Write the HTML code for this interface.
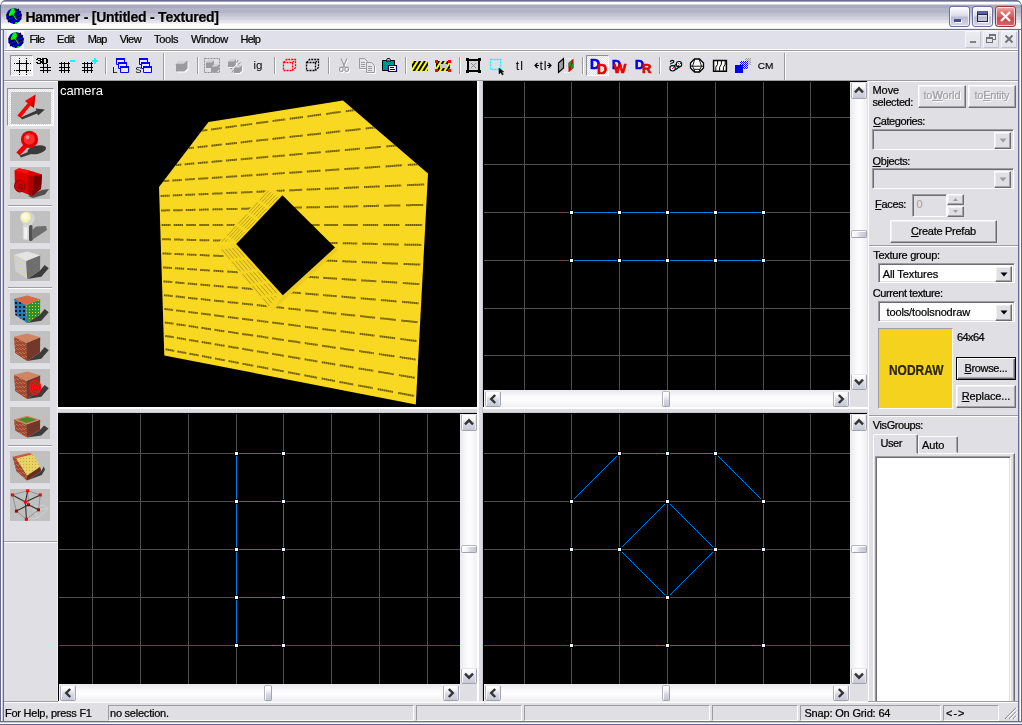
<!DOCTYPE html><html><head><meta charset="utf-8"><title>Hammer</title><style>
*{box-sizing:border-box;margin:0;padding:0}
html,body{width:1022px;height:725px;overflow:hidden;background:#fff}
body{font-family:"Liberation Sans",sans-serif;font-size:11px;color:#000;position:relative}
.a{position:absolute}
.t{position:absolute;white-space:nowrap;line-height:13px;font-size:11px;-webkit-text-stroke:0.22px}
.btn{-webkit-text-stroke:0.22px}
#win{position:absolute;left:0;top:0;width:1022px;height:725px;background:#e0dfe3;border-radius:6px 6px 0 0;overflow:hidden;will-change:transform}
.vp{position:absolute;background:#000;overflow:hidden}
.sb{position:absolute;background:linear-gradient(90deg,#e9e9ee,#fbfbfd 40%,#fdfdfe 60%,#f0f0f4)}
.sbh{position:absolute;background:linear-gradient(180deg,#e9e9ee,#fbfbfd 40%,#fdfdfe 60%,#f0f0f4)}
.sbtn{position:absolute;width:16px;height:16px;border:1px solid;border-color:#e4e4ea #a6a6b2 #a2a2ae #b2b2bc;border-radius:2px;background:linear-gradient(180deg,#ffffff,#f6f6f9 30%,#d9dae4 55%,#c6c8d6);box-shadow:inset 1px 1px 0 #fff,inset -1px 0 0 #e8e8ee}
.thumbv{position:absolute;width:16px;height:8px;border:1px solid;border-color:#b6b6c2 #a2a2ae #a2a2ae #b2b2bc;border-radius:2px;background:linear-gradient(90deg,#ffffff,#f2f2f6 35%,#d6d7e2 60%,#c4c6d4);box-shadow:inset 1px 1px 0 #fff}
.thumbh{position:absolute;width:8px;height:16px;border:1px solid;border-color:#b6b6c2 #a2a2ae #a2a2ae #b2b2bc;border-radius:2px;background:linear-gradient(180deg,#ffffff,#f2f2f6 35%,#d6d7e2 60%,#c4c6d4);box-shadow:inset 1px 1px 0 #fff}
.btn{position:absolute;border:1px solid;border-color:#fff #6e6e72 #6e6e72 #fff;box-shadow:inset -1px -1px 0 #a5a5a8,inset 1px 1px 0 #f1eff2;background:#e0dfe3;text-align:center;font-size:11px;white-space:nowrap}
.sunk{position:absolute;border:1px solid;border-color:#9d9da1 #fff #fff #9d9da1;box-shadow:inset 1px 1px 0 #6e6e72,inset -1px -1px 0 #e0dfe3}
.pane{position:absolute;top:705px;height:16px;border:1px solid;border-color:#9d9da1 #fff #fff #9d9da1}
.icn{position:absolute;left:10px;width:40px;height:32px;background:#c0c0c0;overflow:hidden}
.tsep{position:absolute;top:57px;width:2px;height:17px;border-left:1px solid #9d9da1;border-right:1px solid #fff}
.lsep{position:absolute;left:8px;width:44px;height:2px;border-top:1px solid #9d9da1;border-bottom:1px solid #fff}
u{text-decoration:underline}
</style></head><body><div id="win">
<div class="a" style="left:0;top:0;width:1022px;height:30px;background:linear-gradient(180deg,#6d6d90 0px,#6d6d90 1px,#9c9cc4 1px,#9c9cc4 2px,#ffffff 2px,#ffffff 4px,#d5d6e0 4.5px,#a8a9bd 5.5px,#a8a9bd 8px,#b3b4c7 8.5px,#b3b4c7 13px,#c0c1d0 13.5px,#c4c5d3 16px,#d0d1dc 17px,#d3d4df 20px,#e1e1e9 20.5px,#e6e6ed 23px,#f3f3f7 23.5px,#ffffff 25px,#ffffff 28px,#ececf2 28.5px,#ececf2 29px,#6b6ba3 29px,#6b6ba3 30px)"></div>
<svg class="a" style="left:6px;top:8px" width="16" height="16" viewBox="0 0 16 16"><circle cx="8" cy="8" r="7.8" fill="#0000f8"/><path d="M0.5 7.2 L3.2 5.8 M0.6 10.6 L6.3 7.7 M2 13.8 L8 10.6 M9.5 3 L13 1.2 M9.2 6.4 L15 3.4 M10.5 9.4 L15.8 6.6 M11.5 12.4 L15.3 10.4 M7 15.2 L12.5 12.9" stroke="#000" stroke-width="1.5" fill="none"/><path d="M2.6 5.9 L4.6 1.9 L6.2 0.3 L8.6 0.3 L9.2 4 L8.3 5.9 L5.6 7.6 L3.3 7.9 Z" fill="#00f800"/><path d="M7.2 6.2 L10.6 11.7" stroke="#00f800" stroke-width="1.5"/><path d="M9 14.2 L11.6 13.8 L11.2 15.3 L9.4 15.7Z" fill="#00f000"/><path d="M2.3 5.9 L4.3 1.6 M8.8 0.2 L9.5 4.2 L8.5 6 M6.3 7.6 L9.6 12.5 M8 6.6 L11.3 11.6" stroke="#000" stroke-width="0.7" fill="none"/></svg>
<div class="t" style="left:25.4px;top:8.5px;letter-spacing:-0.236px;font-size:14px;font-weight:bold;line-height:17px;text-shadow:0 1px 0 rgba(255,255,255,.55)">Hammer - [Untitled - Textured]</div>
<div class="a" style="left:949px;top:6px;width:21px;height:21px;border:1px solid #6c6e9c;border-radius:3px;background:linear-gradient(180deg,#ffffff,#dcdde8 45%,#b9bbd0 55%,#d8d9e6);box-shadow:inset 0 0 0 1px rgba(255,255,255,.7)"><div class="a" style="left:4px;top:12px;width:7px;height:3px;background:#4a4e8c;box-shadow:1px 1px 0 #fff"></div></div>
<div class="a" style="left:972px;top:6px;width:21px;height:21px;border:1px solid #6c6e9c;border-radius:3px;background:linear-gradient(180deg,#ffffff,#dcdde8 45%,#b9bbd0 55%,#d8d9e6);box-shadow:inset 0 0 0 1px rgba(255,255,255,.7)"><div class="a" style="left:4px;top:4px;width:11px;height:11px;border:1px solid #23234a;border-top:3px solid #5a5ea2;box-shadow:1px 1px 0 #fff,inset 0 1px 0 #23234a"></div></div>
<div class="a" style="left:995px;top:6px;width:21px;height:21px;border:1px solid #8f3a38;border-radius:3px;background:linear-gradient(180deg,#f0b0a8,#e07a78 25%,#d65c5e 50%,#c8484c 60%,#d4686a);box-shadow:inset 0 0 0 1px rgba(255,255,255,.7)"><svg class="a" style="left:2px;top:2px" width="15" height="15" viewBox="0 0 15 15"><path d="M3 3 L12 12 M12 3 L3 12" stroke="#fff" stroke-width="2.2" stroke-linecap="butt"/></svg></div>
<div class="a" style="left:0;top:0;width:1022px;height:30px;border:1px solid #6d6d90;border-bottom:none;border-radius:6px 6px 0 0"></div>
<div class="a" style="left:0;top:30px;width:4px;height:695px;background:linear-gradient(90deg,#66668c 0,#66668c 1px,#fff 1px,#fff 2px,#c9c9d6 2px,#c9c9d6 3px,#6b6ba3 3px)"></div>
<div class="a" style="left:1018px;top:30px;width:4px;height:695px;background:linear-gradient(270deg,#66668c 0,#66668c 1px,#fff 1px,#fff 2px,#c9c9d6 2px,#c9c9d6 3px,#6b6ba3 3px)"></div>
<div class="a" style="left:0;top:721px;width:1022px;height:4px;background:linear-gradient(0deg,#66668c 0,#66668c 1px,#fff 1px,#fff 2px,#c9c9d6 2px,#c9c9d6 3px,#6b6ba3 3px)"></div>
<div class="a" style="left:0;top:5px;width:1px;height:25px;background:#66668c"></div><div class="a" style="left:1021px;top:5px;width:1px;height:25px;background:#66668c"></div>
<div class="a" style="left:4px;top:30px;width:1014px;height:1px;background:#f0f0f5"></div>
<div class="a" style="left:4px;top:31px;width:1014px;height:18px;background:#dfe0e9"></div>
<div class="a" style="left:4px;top:49px;width:1014px;height:1px;background:#fff"></div>
<div class="a" style="left:4px;top:50px;width:1014px;height:1px;background:#9d9da1"></div>
<div class="a" style="left:4px;top:51px;width:1014px;height:1px;background:#fff"></div>
<div class="a" style="left:7px;top:31px;width:17px;height:18px;background:#f4f4f8"></div>
<svg class="a" style="left:8px;top:32px" width="16" height="16" viewBox="0 0 16 16"><circle cx="8" cy="8" r="7.8" fill="#0000f8"/><path d="M0.5 7.2 L3.2 5.8 M0.6 10.6 L6.3 7.7 M2 13.8 L8 10.6 M9.5 3 L13 1.2 M9.2 6.4 L15 3.4 M10.5 9.4 L15.8 6.6 M11.5 12.4 L15.3 10.4 M7 15.2 L12.5 12.9" stroke="#000" stroke-width="1.5" fill="none"/><path d="M2.6 5.9 L4.6 1.9 L6.2 0.3 L8.6 0.3 L9.2 4 L8.3 5.9 L5.6 7.6 L3.3 7.9 Z" fill="#00f800"/><path d="M7.2 6.2 L10.6 11.7" stroke="#00f800" stroke-width="1.5"/><path d="M9 14.2 L11.6 13.8 L11.2 15.3 L9.4 15.7Z" fill="#00f000"/><path d="M2.3 5.9 L4.3 1.6 M8.8 0.2 L9.5 4.2 L8.5 6 M6.3 7.6 L9.6 12.5 M8 6.6 L11.3 11.6" stroke="#000" stroke-width="0.7" fill="none"/></svg>
<div class="t" style="left:29.6px;top:33px;letter-spacing:-0.711px;">File</div>
<div class="t" style="left:57px;top:33px;letter-spacing:-0.390px;">Edit</div>
<div class="t" style="left:87.7px;top:33px;letter-spacing:-0.853px;">Map</div>
<div class="t" style="left:119.7px;top:33px;letter-spacing:-0.585px;">View</div>
<div class="t" style="left:154px;top:33px;letter-spacing:-0.272px;">Tools</div>
<div class="t" style="left:191px;top:33px;letter-spacing:-0.385px;">Window</div>
<div class="t" style="left:240.5px;top:33px;letter-spacing:-0.775px;">Help</div>
<div class="a" style="left:965px;top:31px;width:16px;height:17px;border:1px solid;border-color:#f6f6fa #c6c6d0 #c2c2cc #f6f6fa;border-radius:1px;background:linear-gradient(180deg,#ececf2,#e2e2ea);"><div class="a" style="left:4px;top:9px;width:6px;height:2px;background:#808088"></div></div>
<div class="a" style="left:983px;top:31px;width:16px;height:17px;border:1px solid;border-color:#f6f6fa #c6c6d0 #c2c2cc #f6f6fa;border-radius:1px;background:linear-gradient(180deg,#ececf2,#e2e2ea);"><div class="a" style="left:5px;top:2px;width:7px;height:6px;border:1px solid #707078;border-top-width:2px"></div><div class="a" style="left:2px;top:5px;width:7px;height:6px;border:1px solid #707078;border-top-width:2px;background:#e6e6ec"></div></div>
<div class="a" style="left:1001px;top:31px;width:16px;height:17px;border:1px solid;border-color:#f6f6fa #c6c6d0 #c2c2cc #f6f6fa;border-radius:1px;background:linear-gradient(180deg,#ececf2,#e2e2ea);"><svg class="a" style="left:2px;top:2px" width="10" height="10" viewBox="0 0 10 10"><path d="M1.5 1.5 L8.5 8.5 M8.5 1.5 L1.5 8.5" stroke="#707078" stroke-width="1.8"/></svg></div>
<div class="a" style="left:4px;top:80px;width:1014px;height:1px;background:#9d9da1"></div>
<div class="a" style="left:163px;top:53px;width:1px;height:27px;background:#9d9da1"></div><div class="a" style="left:164px;top:53px;width:1px;height:27px;background:#fff"></div>
<div class="a" style="left:784px;top:53px;width:1px;height:27px;background:#9d9da1"></div><div class="a" style="left:785px;top:53px;width:1px;height:27px;background:#fff"></div>
<div class="tsep" style="left:105px"></div>
<div class="tsep" style="left:197px"></div>
<div class="tsep" style="left:274px"></div>
<div class="tsep" style="left:328px"></div>
<div class="tsep" style="left:405px"></div>
<div class="tsep" style="left:459px"></div>
<div class="tsep" style="left:582px"></div>
<div class="tsep" style="left:659px"></div>
<div class="a" style="left:4px;top:701px;width:1014px;height:1px;background:#9d9da1"></div>
<div class="a" style="left:4px;top:702px;width:1014px;height:1px;background:#fff"></div>
<div class="a" style="left:58px;top:701px;width:810px;height:1px;background:#f1f1f5"></div>
<div class="t" style="left:5px;top:707px;letter-spacing:-0.241px;">For Help, press F1</div>
<div class="pane" style="left:108px;width:306px"></div>
<div class="pane" style="left:416px;width:106px"></div>
<div class="pane" style="left:524px;width:186px"></div>
<div class="pane" style="left:712px;width:86px"></div>
<div class="pane" style="left:800px;width:141px"></div>
<div class="pane" style="left:943px;width:56px"></div>
<div class="t" style="left:110px;top:707px;letter-spacing:-0.230px;">no selection.</div>
<div class="t" style="left:804.4px;top:707px;letter-spacing:-0.161px;">Snap: On Grid: 64</div>
<div class="t" style="left:946px;top:707px;letter-spacing:0.992px;">&lt;-&gt;</div>
<svg class="a" style="left:1003px;top:706px" width="14" height="14" viewBox="0 0 14 14"><path d="M13 2 L2 13 M13 6 L6 13 M13 10 L10 13" stroke="#9d9da1" stroke-width="1.2"/><path d="M14 2 L3 13 M14 6 L7 13 M14 10 L11 13" stroke="#fff" stroke-width="1"/></svg>
<div class="a" style="left:4px;top:81px;width:54px;height:620px;background:#e0dfe3;border-top:1px solid #fff"></div>
<div class="a" style="left:58px;top:407px;width:810px;height:6px;background:linear-gradient(180deg,#fff 0,#fff 2px,#dcdce2 2px,#dcdce2 5px,#c8c8ce 5px)"></div>
<div class="a" style="left:477px;top:81px;width:6px;height:620px;background:linear-gradient(90deg,#fff 0,#fff 2px,#dcdce2 2px,#dcdce2 5px,#c8c8ce 5px)"></div>
<div class="a" style="left:483px;top:81px;width:385px;height:326px;background:#000"></div>
<div class="a" style="left:58px;top:413px;width:419px;height:288px;background:#000"></div>
<div class="a" style="left:483px;top:413px;width:385px;height:288px;background:#000"></div>
<div class="vp" style="left:483px;top:81px;width:367px;height:309px">
<div class="a" style="left:41px;top:1px;width:1px;height:308px;background:#4e4e4e"></div><div class="a" style="left:88px;top:1px;width:1px;height:308px;background:#4e4e4e"></div><div class="a" style="left:136px;top:1px;width:1px;height:308px;background:#4e4e4e"></div><div class="a" style="left:184px;top:1px;width:1px;height:308px;background:#4e4e4e"></div><div class="a" style="left:232px;top:1px;width:1px;height:308px;background:#4e4e4e"></div><div class="a" style="left:280px;top:1px;width:1px;height:308px;background:#4e4e4e"></div><div class="a" style="left:327px;top:1px;width:1px;height:308px;background:#4e4e4e"></div><div class="a" style="left:1px;top:36px;width:366px;height:1px;background:#4e4e4e"></div><div class="a" style="left:1px;top:83px;width:366px;height:1px;background:#4e4e4e"></div><div class="a" style="left:1px;top:131px;width:366px;height:1px;background:#4e4e4e"></div><div class="a" style="left:1px;top:179px;width:366px;height:1px;background:#4e4e4e"></div><div class="a" style="left:1px;top:227px;width:366px;height:1px;background:#4e4e4e"></div><div class="a" style="left:1px;top:274px;width:366px;height:1px;background:#4e4e4e"></div><div class="a" style="left:88px;top:131px;width:193px;height:1px;background:#0082dc"></div><div class="a" style="left:88px;top:179px;width:193px;height:1px;background:#0082dc"></div><div class="a" style="left:88px;top:131px;width:1px;height:49px;background:#0082dc"></div><div class="a" style="left:136px;top:131px;width:1px;height:49px;background:#0082dc"></div><div class="a" style="left:184px;top:131px;width:1px;height:49px;background:#0082dc"></div><div class="a" style="left:232px;top:131px;width:1px;height:49px;background:#0082dc"></div><div class="a" style="left:280px;top:131px;width:1px;height:49px;background:#0082dc"></div><div class="a" style="left:86px;top:129px;width:5px;height:5px;background:#fff;border:1px solid #000"></div><div class="a" style="left:134px;top:129px;width:5px;height:5px;background:#fff;border:1px solid #000"></div><div class="a" style="left:182px;top:129px;width:5px;height:5px;background:#fff;border:1px solid #000"></div><div class="a" style="left:230px;top:129px;width:5px;height:5px;background:#fff;border:1px solid #000"></div><div class="a" style="left:278px;top:129px;width:5px;height:5px;background:#fff;border:1px solid #000"></div><div class="a" style="left:86px;top:177px;width:5px;height:5px;background:#fff;border:1px solid #000"></div><div class="a" style="left:134px;top:177px;width:5px;height:5px;background:#fff;border:1px solid #000"></div><div class="a" style="left:182px;top:177px;width:5px;height:5px;background:#fff;border:1px solid #000"></div><div class="a" style="left:230px;top:177px;width:5px;height:5px;background:#fff;border:1px solid #000"></div><div class="a" style="left:278px;top:177px;width:5px;height:5px;background:#fff;border:1px solid #000"></div>
</div>
<div class="sb" style="left:850px;top:82px;width:17px;height:308px"></div>
<div class="sbtn" style="left:851px;top:82px;height:17px"><svg class="a" style="left:2px;top:3px" width="10" height="8" viewBox="0 0 10 8"><path d="M1 6.3 L5 2.3 L9 6.3" stroke="#333" stroke-width="2.4" fill="none"/></svg></div>
<div class="sbtn" style="left:851px;top:374px;height:16px"><svg class="a" style="left:2px;top:3px" width="10" height="8" viewBox="0 0 10 8"><path d="M1 1.7 L5 5.7 L9 1.7" stroke="#333" stroke-width="2.4" fill="none"/></svg></div>
<div class="thumbv" style="left:851px;top:230px"></div>
<div class="sbh" style="left:484px;top:390px;width:366px;height:17px"></div>
<div class="sbtn" style="left:485px;top:391px"><svg class="a" style="left:3px;top:2px" width="8" height="10" viewBox="0 0 8 10"><path d="M6.2 1 L2.2 5 L6.2 9" stroke="#333" stroke-width="2.4" fill="none"/></svg></div>
<div class="sbtn" style="left:833px;top:391px"><svg class="a" style="left:3px;top:2px" width="8" height="10" viewBox="0 0 8 10"><path d="M1.8 1 L5.8 5 L1.8 9" stroke="#333" stroke-width="2.4" fill="none"/></svg></div>
<div class="thumbh" style="left:662px;top:391px"></div>
<div class="a" style="left:850px;top:390px;width:18px;height:17px;background:#e0dfe3"></div>
<div class="a" style="left:867px;top:81px;width:1px;height:326px;background:#e0dfe3"></div>
<div class="vp" style="left:58px;top:413px;width:402px;height:271px">
<div class="a" style="left:34px;top:1px;width:1px;height:270px;background:#4e4e4e"></div><div class="a" style="left:82px;top:1px;width:1px;height:270px;background:#4e4e4e"></div><div class="a" style="left:130px;top:1px;width:1px;height:270px;background:#4e4e4e"></div><div class="a" style="left:178px;top:1px;width:1px;height:270px;background:#4e4e4e"></div><div class="a" style="left:225px;top:1px;width:1px;height:270px;background:#4e4e4e"></div><div class="a" style="left:273px;top:1px;width:1px;height:270px;background:#4e4e4e"></div><div class="a" style="left:321px;top:1px;width:1px;height:270px;background:#4e4e4e"></div><div class="a" style="left:369px;top:1px;width:1px;height:270px;background:#4e4e4e"></div><div class="a" style="left:1px;top:40px;width:401px;height:1px;background:#4e4e4e"></div><div class="a" style="left:1px;top:88px;width:401px;height:1px;background:#4e4e4e"></div><div class="a" style="left:1px;top:136px;width:401px;height:1px;background:#4e4e4e"></div><div class="a" style="left:1px;top:184px;width:401px;height:1px;background:#4e4e4e"></div><div class="a" style="left:1px;top:232px;width:401px;height:1px;background:#006868"></div><div class="a" style="left:178px;top:40px;width:1px;height:193px;background:#0082dc"></div><div class="a" style="left:225px;top:40px;width:1px;height:193px;background:#0082dc"></div><div class="a" style="left:178px;top:40px;width:48px;height:1px;background:#0082dc"></div><div class="a" style="left:178px;top:88px;width:48px;height:1px;background:#0082dc"></div><div class="a" style="left:178px;top:136px;width:48px;height:1px;background:#0082dc"></div><div class="a" style="left:178px;top:184px;width:48px;height:1px;background:#0082dc"></div><div class="a" style="left:178px;top:232px;width:48px;height:1px;background:#0082dc"></div><div class="a" style="left:176px;top:38px;width:5px;height:5px;background:#fff;border:1px solid #000"></div><div class="a" style="left:176px;top:86px;width:5px;height:5px;background:#fff;border:1px solid #000"></div><div class="a" style="left:176px;top:134px;width:5px;height:5px;background:#fff;border:1px solid #000"></div><div class="a" style="left:176px;top:182px;width:5px;height:5px;background:#fff;border:1px solid #000"></div><div class="a" style="left:176px;top:230px;width:5px;height:5px;background:#fff;border:1px solid #000"></div><div class="a" style="left:223px;top:38px;width:5px;height:5px;background:#fff;border:1px solid #000"></div><div class="a" style="left:223px;top:86px;width:5px;height:5px;background:#fff;border:1px solid #000"></div><div class="a" style="left:223px;top:134px;width:5px;height:5px;background:#fff;border:1px solid #000"></div><div class="a" style="left:223px;top:182px;width:5px;height:5px;background:#fff;border:1px solid #000"></div><div class="a" style="left:223px;top:230px;width:5px;height:5px;background:#fff;border:1px solid #000"></div>
</div>
<div class="sb" style="left:460px;top:414px;width:17px;height:270px"></div>
<div class="sbtn" style="left:461px;top:414px;height:17px"><svg class="a" style="left:2px;top:3px" width="10" height="8" viewBox="0 0 10 8"><path d="M1 6.3 L5 2.3 L9 6.3" stroke="#333" stroke-width="2.4" fill="none"/></svg></div>
<div class="sbtn" style="left:461px;top:668px;height:16px"><svg class="a" style="left:2px;top:3px" width="10" height="8" viewBox="0 0 10 8"><path d="M1 1.7 L5 5.7 L9 1.7" stroke="#333" stroke-width="2.4" fill="none"/></svg></div>
<div class="thumbv" style="left:461px;top:545px"></div>
<div class="sbh" style="left:59px;top:684px;width:401px;height:17px"></div>
<div class="sbtn" style="left:60px;top:685px"><svg class="a" style="left:3px;top:2px" width="8" height="10" viewBox="0 0 8 10"><path d="M6.2 1 L2.2 5 L6.2 9" stroke="#333" stroke-width="2.4" fill="none"/></svg></div>
<div class="sbtn" style="left:443px;top:685px"><svg class="a" style="left:3px;top:2px" width="8" height="10" viewBox="0 0 8 10"><path d="M1.8 1 L5.8 5 L1.8 9" stroke="#333" stroke-width="2.4" fill="none"/></svg></div>
<div class="thumbh" style="left:264px;top:685px"></div>
<div class="a" style="left:460px;top:684px;width:17px;height:17px;background:#e0dfe3"></div>
<div class="vp" style="left:483px;top:413px;width:367px;height:271px">
<div class="a" style="left:41px;top:1px;width:1px;height:270px;background:#4e4e4e"></div><div class="a" style="left:88px;top:1px;width:1px;height:270px;background:#4e4e4e"></div><div class="a" style="left:136px;top:1px;width:1px;height:270px;background:#4e4e4e"></div><div class="a" style="left:184px;top:1px;width:1px;height:270px;background:#4e4e4e"></div><div class="a" style="left:232px;top:1px;width:1px;height:270px;background:#4e4e4e"></div><div class="a" style="left:280px;top:1px;width:1px;height:270px;background:#4e4e4e"></div><div class="a" style="left:327px;top:1px;width:1px;height:270px;background:#4e4e4e"></div><div class="a" style="left:1px;top:40px;width:366px;height:1px;background:#4e4e4e"></div><div class="a" style="left:1px;top:88px;width:366px;height:1px;background:#4e4e4e"></div><div class="a" style="left:1px;top:136px;width:366px;height:1px;background:#4e4e4e"></div><div class="a" style="left:1px;top:184px;width:366px;height:1px;background:#4e4e4e"></div><div class="a" style="left:1px;top:232px;width:366px;height:1px;background:#006868"></div><svg class="a" style="left:0;top:0;overflow:visible" width="1" height="1"><line x1="88.5" y1="88.5" x2="136.5" y2="40.5" stroke="#0082dc" stroke-width="1" shape-rendering="crispEdges"/></svg><div class="a" style="left:136px;top:40px;width:97px;height:1px;background:#0082dc"></div><svg class="a" style="left:0;top:0;overflow:visible" width="1" height="1"><line x1="232.5" y1="40.5" x2="280.5" y2="88.5" stroke="#0082dc" stroke-width="1" shape-rendering="crispEdges"/></svg><div class="a" style="left:280px;top:88px;width:1px;height:145px;background:#0082dc"></div><div class="a" style="left:88px;top:232px;width:193px;height:1px;background:#0082dc"></div><div class="a" style="left:88px;top:88px;width:1px;height:145px;background:#0082dc"></div><div class="a" style="left:184px;top:40px;width:1px;height:49px;background:#0082dc"></div><div class="a" style="left:88px;top:136px;width:49px;height:1px;background:#0082dc"></div><div class="a" style="left:232px;top:136px;width:49px;height:1px;background:#0082dc"></div><div class="a" style="left:184px;top:184px;width:1px;height:49px;background:#0082dc"></div><svg class="a" style="left:0;top:0;overflow:visible" width="1" height="1"><line x1="184.5" y1="88.5" x2="232.5" y2="136.5" stroke="#0082dc" stroke-width="1" shape-rendering="crispEdges"/></svg><svg class="a" style="left:0;top:0;overflow:visible" width="1" height="1"><line x1="232.5" y1="136.5" x2="184.5" y2="184.5" stroke="#0082dc" stroke-width="1" shape-rendering="crispEdges"/></svg><svg class="a" style="left:0;top:0;overflow:visible" width="1" height="1"><line x1="184.5" y1="184.5" x2="136.5" y2="136.5" stroke="#0082dc" stroke-width="1" shape-rendering="crispEdges"/></svg><svg class="a" style="left:0;top:0;overflow:visible" width="1" height="1"><line x1="136.5" y1="136.5" x2="184.5" y2="88.5" stroke="#0082dc" stroke-width="1" shape-rendering="crispEdges"/></svg><div class="a" style="left:86px;top:86px;width:5px;height:5px;background:#fff;border:1px solid #000"></div><div class="a" style="left:134px;top:38px;width:5px;height:5px;background:#fff;border:1px solid #000"></div><div class="a" style="left:182px;top:38px;width:5px;height:5px;background:#fff;border:1px solid #000"></div><div class="a" style="left:230px;top:38px;width:5px;height:5px;background:#fff;border:1px solid #000"></div><div class="a" style="left:278px;top:86px;width:5px;height:5px;background:#fff;border:1px solid #000"></div><div class="a" style="left:182px;top:86px;width:5px;height:5px;background:#fff;border:1px solid #000"></div><div class="a" style="left:86px;top:134px;width:5px;height:5px;background:#fff;border:1px solid #000"></div><div class="a" style="left:134px;top:134px;width:5px;height:5px;background:#fff;border:1px solid #000"></div><div class="a" style="left:230px;top:134px;width:5px;height:5px;background:#fff;border:1px solid #000"></div><div class="a" style="left:278px;top:134px;width:5px;height:5px;background:#fff;border:1px solid #000"></div><div class="a" style="left:182px;top:182px;width:5px;height:5px;background:#fff;border:1px solid #000"></div><div class="a" style="left:86px;top:230px;width:5px;height:5px;background:#fff;border:1px solid #000"></div><div class="a" style="left:182px;top:230px;width:5px;height:5px;background:#fff;border:1px solid #000"></div><div class="a" style="left:278px;top:230px;width:5px;height:5px;background:#fff;border:1px solid #000"></div>
</div>
<div class="sb" style="left:850px;top:414px;width:17px;height:270px"></div>
<div class="sbtn" style="left:851px;top:414px;height:17px"><svg class="a" style="left:2px;top:3px" width="10" height="8" viewBox="0 0 10 8"><path d="M1 6.3 L5 2.3 L9 6.3" stroke="#333" stroke-width="2.4" fill="none"/></svg></div>
<div class="sbtn" style="left:851px;top:668px;height:16px"><svg class="a" style="left:2px;top:3px" width="10" height="8" viewBox="0 0 10 8"><path d="M1 1.7 L5 5.7 L9 1.7" stroke="#333" stroke-width="2.4" fill="none"/></svg></div>
<div class="thumbv" style="left:851px;top:545px"></div>
<div class="sbh" style="left:484px;top:684px;width:366px;height:17px"></div>
<div class="sbtn" style="left:485px;top:685px"><svg class="a" style="left:3px;top:2px" width="8" height="10" viewBox="0 0 8 10"><path d="M6.2 1 L2.2 5 L6.2 9" stroke="#333" stroke-width="2.4" fill="none"/></svg></div>
<div class="sbtn" style="left:833px;top:685px"><svg class="a" style="left:3px;top:2px" width="8" height="10" viewBox="0 0 8 10"><path d="M1.8 1 L5.8 5 L1.8 9" stroke="#333" stroke-width="2.4" fill="none"/></svg></div>
<div class="thumbh" style="left:662px;top:685px"></div>
<div class="a" style="left:850px;top:684px;width:18px;height:17px;background:#e0dfe3"></div>
<div class="a" style="left:867px;top:413px;width:1px;height:288px;background:#e0dfe3"></div>
<div class="vp" style="left:58px;top:81px;width:419px;height:326px">
<svg class="a" style="left:0;top:0" width="419" height="326" viewBox="0 0 419 326"><defs><clipPath id="cf"><path clip-rule="evenodd" d="M101.0,106.0 L150.5,41.0 L285.0,19.6 L370.0,92.4 L357.8,323.4 L106.3,274.4 Z M212.4,105.1 L280.0,169.0 L213.4,230.8 L158.1,164.6 Z"/></clipPath></defs><polygon fill="#f9d821" points="101.0,106.0 150.5,41.0 285.0,19.6 370.0,92.4 357.8,323.4 106.3,274.4"/><path clip-path="url(#cf)" d="M100.7 55.5L109.9 54.2M113.1 53.8L122.6 52.5M125.9 52.1L135.8 50.7M139.2 50.3L149.5 48.9M153.1 48.4L163.8 47.0M167.5 46.5L178.7 44.9M182.6 44.4L194.2 42.9M198.2 42.3L210.4 40.7M214.6 40.1L227.3 38.4M231.7 37.8L244.9 36.0M249.5 35.4L263.4 33.5M268.2 32.9L282.7 30.9M287.8 30.3L303.0 28.2M308.3 27.5L324.3 25.3M329.8 24.6L346.7 22.3M352.5 21.6L370.2 19.2M101.2 70.5L110.4 69.5M113.5 69.2L123.0 68.1M126.3 67.7L136.2 66.6M139.6 66.3L149.8 65.1M153.4 64.7L164.1 63.5M167.7 63.1L178.9 61.9M182.7 61.4L194.3 60.1M198.3 59.7L210.4 58.4M214.5 57.9L227.2 56.5M231.5 56.0L244.7 54.5M249.3 54.0L263.1 52.5M267.9 51.9L282.3 50.3M287.3 49.8L302.5 48.1M307.7 47.5L323.6 45.7M329.1 45.1L345.8 43.2M351.6 42.6L369.2 40.6M101.7 85.5L110.8 84.7M113.9 84.4L123.4 83.6M126.7 83.3L136.5 82.4M139.9 82.1L150.1 81.2M153.6 80.9L164.3 79.9M167.9 79.6L179.0 78.6M182.8 78.3L194.4 77.3M198.3 76.9L210.4 75.8M214.5 75.5L227.1 74.4M231.4 74.0L244.5 72.8M249.1 72.4L262.8 71.2M267.5 70.8L281.9 69.5M286.8 69.1L301.9 67.7M307.1 67.3L322.9 65.9M328.4 65.4L345.0 63.9M350.7 63.4L368.2 61.8M102.2 100.3L111.3 99.7M114.4 99.5L123.8 98.9M127.1 98.6L136.9 98.0M140.2 97.8L150.4 97.1M153.9 96.9L164.5 96.2M168.1 95.9L179.2 95.2M183.0 95.0L194.4 94.2M198.4 93.9L210.4 93.1M214.5 92.9L227.0 92.0M231.3 91.8L244.3 90.9M248.8 90.6L262.5 89.7M267.2 89.4L281.5 88.4M286.4 88.1L301.4 87.1M306.5 86.8L322.2 85.7M327.6 85.4L344.1 84.3M349.8 83.9L367.2 82.8M102.6 115.0L111.7 114.6M114.8 114.4L124.2 114.0M127.4 113.9L137.2 113.5M140.6 113.3L150.7 112.9M154.2 112.7L164.7 112.3M168.3 112.1L179.3 111.6M183.1 111.5L194.5 111.0M198.5 110.8L210.4 110.3M214.5 110.1L226.9 109.5M231.2 109.4L244.2 108.8M248.6 108.6L262.2 108.0M266.9 107.8L281.1 107.2M286.0 107.0L300.8 106.3M306.0 106.1L321.6 105.4M326.9 105.2L343.3 104.4M349.0 104.2L366.2 103.4M103.1 129.5L112.1 129.3M115.2 129.3L124.6 129.1M127.8 129.0L137.5 128.8M140.9 128.7L151.0 128.5M154.4 128.4L164.9 128.2M168.5 128.1L179.5 127.9M183.2 127.8L194.6 127.5M198.5 127.5L210.4 127.2M214.4 127.1L226.8 126.9M231.1 126.8L244.0 126.5M248.4 126.4L261.9 126.1M266.6 126.0L280.7 125.7M285.5 125.6L300.3 125.3M305.4 125.2L320.9 124.8M326.2 124.7L342.5 124.4M348.1 124.2L365.2 123.9M103.6 143.9L112.6 143.9M115.7 143.9L125.0 144.0M128.2 144.0L137.9 144.0M141.2 144.0L151.3 144.0M154.7 144.0L165.2 144.0M168.7 144.0L179.6 144.0M183.4 144.0L194.7 144.0M198.6 144.0L210.4 144.0M214.4 144.0L226.7 144.0M230.9 144.0L243.8 144.0M248.2 144.0L261.6 144.0M266.2 144.0L280.3 144.0M285.1 144.0L299.8 144.0M304.9 144.0L320.2 144.0M325.6 144.0L341.7 144.0M347.3 144.0L364.2 144.0M104.1 158.2L113.0 158.4M116.1 158.5L125.4 158.7M128.6 158.8L138.2 159.0M141.5 159.1L151.5 159.3M155.0 159.4L165.4 159.6M168.9 159.7L179.8 159.9M183.5 160.0L194.7 160.2M198.6 160.3L210.4 160.6M214.4 160.7L226.6 160.9M230.8 161.0L243.6 161.3M248.0 161.4L261.3 161.7M265.9 161.8L279.9 162.1M284.7 162.2L299.3 162.5M304.3 162.6L319.6 163.0M324.9 163.1L340.9 163.5M346.4 163.6L363.3 163.9M104.5 172.4L113.4 172.8M116.5 172.9L125.8 173.3M128.9 173.5L138.5 173.9M141.8 174.0L151.8 174.5M155.2 174.6L165.6 175.1M169.1 175.2L179.9 175.7M183.6 175.8L194.8 176.3M198.7 176.5L210.4 177.0M214.4 177.2L226.5 177.7M230.7 177.9L243.4 178.4M247.8 178.6L261.1 179.2M265.6 179.4L279.5 180.0M284.3 180.2L298.8 180.9M303.8 181.1L319.0 181.7M324.2 182.0L340.1 182.7M345.6 182.9L362.3 183.6M105.0 186.5L113.9 187.0M116.9 187.2L126.1 187.8M129.3 188.0L138.9 188.6M142.1 188.9L152.1 189.5M155.5 189.7L165.8 190.4M169.3 190.6L180.1 191.3M183.7 191.6L194.9 192.3M198.7 192.5L210.3 193.3M214.3 193.5L226.4 194.3M230.6 194.6L243.2 195.4M247.6 195.7L260.8 196.5M265.3 196.8L279.1 197.7M283.8 198.0L298.3 199.0M303.2 199.3L318.3 200.3M323.5 200.6L339.4 201.6M344.8 202.0L361.4 203.1M105.4 200.4L114.3 201.1M117.3 201.4L126.5 202.2M129.7 202.5L139.2 203.3M142.4 203.6L152.3 204.4M155.7 204.7L166.0 205.6M169.5 205.9L180.2 206.8M183.9 207.1L195.0 208.1M198.8 208.4L210.3 209.4M214.3 209.7L226.4 210.8M230.5 211.1L243.1 212.2M247.4 212.6L260.5 213.7M265.0 214.1L278.7 215.2M283.4 215.6L297.8 216.9M302.7 217.3L317.7 218.6M322.9 219.0L338.6 220.4M344.0 220.8L360.5 222.3M105.9 214.2L114.7 215.1M117.7 215.4L126.9 216.4M130.0 216.8L139.5 217.8M142.8 218.1L152.6 219.2M156.0 219.5L166.2 220.6M169.7 221.0L180.3 222.1M184.0 222.5L195.0 223.7M198.8 224.1L210.3 225.3M214.3 225.7L226.3 227.0M230.4 227.5L242.9 228.8M247.2 229.2L260.2 230.6M264.7 231.1L278.3 232.6M283.0 233.1L297.3 234.6M302.2 235.1L317.1 236.7M322.2 237.2L337.8 238.9M343.2 239.5L359.6 241.2M106.3 227.9L115.1 229.0M118.1 229.4L127.2 230.5M130.4 230.9L139.8 232.1M143.1 232.5L152.9 233.8M156.2 234.2L166.4 235.5M169.9 236.0L180.5 237.3M184.1 237.8L195.1 239.2M198.9 239.6L210.3 241.1M214.3 241.6L226.2 243.1M230.3 243.6L242.7 245.2M247.0 245.8L260.0 247.4M264.4 248.0L278.0 249.7M282.6 250.3L296.8 252.1M301.7 252.7L316.5 254.6M321.6 255.3L337.1 257.2M342.4 257.9L358.7 260.0M106.8 241.4L115.5 242.7M118.5 243.2L127.6 244.5M130.7 245.0L140.1 246.4M143.4 246.8L153.1 248.3M156.5 248.8L166.6 250.3M170.1 250.8L180.6 252.3M184.2 252.9L195.2 254.5M198.9 255.0L210.3 256.7M214.2 257.3L226.1 259.1M230.2 259.7L242.5 261.5M246.8 262.1L259.7 264.0M264.1 264.7L277.6 266.7M282.2 267.3L296.3 269.4M301.1 270.1L315.9 272.3M320.9 273.1L336.4 275.3M341.7 276.1L357.8 278.5M107.2 254.9L115.9 256.3M118.9 256.8L128.0 258.4M131.1 258.9L140.4 260.5M143.7 261.0L153.4 262.6M156.7 263.2L166.8 264.9M170.3 265.5L180.7 267.2M184.3 267.8L195.2 269.7M199.0 270.3L210.3 272.2M214.2 272.8L226.0 274.8M230.1 275.5L242.4 277.6M246.6 278.3L259.4 280.4M263.8 281.2L277.2 283.4M281.8 284.2L295.8 286.5M300.6 287.4L315.3 289.8M320.3 290.7L335.6 293.2M340.9 294.1L357.0 296.8M107.6 268.2L116.3 269.9M119.3 270.4L128.3 272.1M131.4 272.7L140.7 274.4M144.0 275.0L153.6 276.9M157.0 277.5L167.0 279.4M170.5 280.0L180.9 282.0M184.5 282.7L195.3 284.7M199.0 285.4L210.3 287.5M214.2 288.2L225.9 290.4M230.0 291.2L242.2 293.5M246.4 294.3L259.2 296.7M263.6 297.5L276.9 300.0M281.4 300.9L295.4 303.5M300.1 304.4L314.7 307.1M319.7 308.1L334.9 310.9M340.1 311.9L356.1 314.9" stroke="#5a4804" stroke-opacity="0.85" stroke-width="2" stroke-dasharray="1.7 0.3" fill="none"/><polygon points="212.4,105.1 158.1,164.6 178.2,163.1 224.4,114.3" fill="#f8d721"/><polygon points="158.1,164.6 213.4,230.8 224.8,214.3 178.2,163.1" fill="#f6d520"/><polygon points="213.4,230.8 280.0,169.0 277.0,166.6 224.8,214.3" fill="#efcd1d"/><path d="M210.6 109.7L163.7 160.9M163.8 168.3L211.5 225.0M212.9 111.2L167.2 160.8M167.3 167.9L213.7 222.1M215.1 112.8L170.8 160.6M170.8 167.4L215.8 219.3M217.4 114.3L174.3 160.5M174.3 167.0L218.0 216.5M219.6 115.9L177.8 160.3M177.9 166.6L220.1 213.7" stroke="#7a6608" stroke-opacity="0.6" stroke-width="0.8" stroke-dasharray="13 3" fill="none"/><polygon points="224.4,114.3 277.0,166.6 224.8,214.3 178.2,163.1" fill="#000"/></svg>
<div class="t" style="left:2px;top:2px;letter-spacing:-0.072px;color:#fff;font-size:13px;line-height:15px;-webkit-text-stroke:0">camera</div>
</div>
<div class="a" style="left:868px;top:81px;width:150px;height:620px;background:#e0dfe3;border-top:1px solid #fff"></div>
<div class="a" style="left:868px;top:81px;width:1px;height:620px;background:#fff"></div>
<div class="t" style="left:872.5px;top:83.5px;letter-spacing:-0.069px;">Move</div>
<div class="t" style="left:872.5px;top:96px;letter-spacing:-0.391px;">selected:</div>
<div class="btn" style="left:918px;top:85px;width:48px;height:23px;line-height:19px;color:#a3a2a8;text-shadow:1px 1px 0 #fff"><span style="letter-spacing:-0.086px;margin-right:0.086px;">to<u>W</u>orld</span></div>
<div class="btn" style="left:968px;top:85px;width:48px;height:23px;line-height:19px;color:#a3a2a8;text-shadow:1px 1px 0 #fff"><span style="letter-spacing:-0.246px;margin-right:0.246px;">to<u>E</u>ntity</span></div>
<div class="t" style="left:873.2px;top:115px;letter-spacing:-0.417px;"><u>C</u>ategories:</div>
<div class="sunk" style="left:872px;top:129px;width:142px;height:21px;background:#e0dfe3"><div class="btn" style="right:2px;top:2px;width:17px;height:17px"><svg class="a" style="left:4px;top:5px" width="8" height="5" viewBox="0 0 8 5"><path d="M0.5 0.5 L7.5 0.5 L4 4.5Z" fill="#9d9da1"/></svg></div></div>
<div class="t" style="left:872.5px;top:155px;letter-spacing:-0.351px;"><u>O</u>bjects:</div>
<div class="sunk" style="left:872px;top:168px;width:142px;height:21px;background:#e0dfe3"><div class="btn" style="right:2px;top:2px;width:17px;height:17px"><svg class="a" style="left:4px;top:5px" width="8" height="5" viewBox="0 0 8 5"><path d="M0.5 0.5 L7.5 0.5 L4 4.5Z" fill="#9d9da1"/></svg></div></div>
<div class="t" style="left:875.1px;top:198px;letter-spacing:-0.346px;"><u>F</u>aces:</div>
<div class="sunk" style="left:912px;top:194px;width:35px;height:23px;background:#e0dfe3"><div class="t" style="left:3.5px;top:2.7px;letter-spacing:0.000px;color:#b9a3a3">0</div></div>
<div class="btn" style="left:947px;top:194px;width:17px;height:11px"><svg class="a" style="left:5px;top:3px" width="5" height="3" viewBox="0 0 5 3"><path d="M2.5 0L5 3L0 3Z" fill="#9d9da1"/></svg></div>
<div class="btn" style="left:947px;top:206px;width:17px;height:11px"><svg class="a" style="left:5px;top:3px" width="5" height="3" viewBox="0 0 5 3"><path d="M0 0L5 0L2.5 3Z" fill="#9d9da1"/></svg></div>
<div class="btn" style="left:890px;top:220px;width:107px;height:23px;line-height:21px"><span style="letter-spacing:-0.275px;margin-right:0.275px;"><u>C</u>reate Prefab</span></div>
<div class="a" style="left:869px;top:245px;width:149px;height:1px;background:#9d9da1"></div><div class="a" style="left:869px;top:246px;width:149px;height:1px;background:#fff"></div>
<div class="t" style="left:873.2px;top:249px;letter-spacing:-0.264px;">Texture group:</div>
<div class="sunk" style="left:878px;top:263px;width:137px;height:20px;background:#fff"><div class="btn" style="right:2px;top:2px;width:17px;height:16px"><svg class="a" style="left:4px;top:5px" width="8" height="5" viewBox="0 0 8 5"><path d="M0.5 0.5 L7.5 0.5 L4 4.5Z" fill="#000"/></svg></div><div class="t" style="left:3.7px;top:3.8px;letter-spacing:-0.105px;">All Textures</div></div>
<div class="t" style="left:872.8px;top:287px;letter-spacing:-0.408px;">Current texture:</div>
<div class="sunk" style="left:878px;top:301px;width:137px;height:21px;background:#fff"><div class="btn" style="right:2px;top:2px;width:17px;height:17px"><svg class="a" style="left:4px;top:5px" width="8" height="5" viewBox="0 0 8 5"><path d="M0.5 0.5 L7.5 0.5 L4 4.5Z" fill="#000"/></svg></div><div class="t" style="left:7.5px;top:4.3px;letter-spacing:-0.126px;">tools/toolsnodraw</div></div>
<div class="a" style="left:878px;top:328px;width:75px;height:81px;background:#f4d21e;border:1px solid;border-color:#9d9da1 #fff #fff #9d9da1"><div class="t" style="left:10px;top:33px;letter-spacing:0.000px;font-weight:bold;font-size:14px;line-height:16px;color:#2b2500;transform-origin:0 0;transform:scaleX(0.853);filter:blur(0.3px)">NODRAW</div></div>
<div class="t" style="left:956.9px;top:331px;letter-spacing:-0.546px;">64x64</div>
<div class="btn" style="left:956px;top:357px;width:60px;height:23px;line-height:20px;border:1px solid #000;box-shadow:inset 1px 1px 0 #fff,inset -1px -1px 0 #6e6e72,inset -2px -2px 0 #a5a5a8"><span style="letter-spacing:-0.332px;margin-right:0.332px;"><u>B</u>rowse...</span></div>
<div class="btn" style="left:956px;top:385px;width:60px;height:23px;line-height:20px"><span style="letter-spacing:-0.094px;margin-right:0.094px;"><u>R</u>eplace...</span></div>
<div class="a" style="left:869px;top:415px;width:149px;height:1px;background:#9d9da1"></div><div class="a" style="left:869px;top:416px;width:149px;height:1px;background:#fff"></div>
<div class="t" style="left:872.8px;top:419px;letter-spacing:-0.402px;">VisGroups:</div>
<div class="a" style="left:868px;top:430px;width:150px;height:271px;overflow:hidden">
<div class="a" style="left:5px;top:23px;width:142px;height:300px;border:1px solid;border-color:#fff #6e6e72 #6e6e72 #fff;box-shadow:inset -1px 0 0 #a5a5a8"></div>
<div class="a" style="left:5px;top:4px;width:45px;height:20px;background:#e0dfe3;border:1px solid;border-color:#fff #6e6e72 transparent #fff;border-radius:2px 2px 0 0;box-shadow:inset -1px 0 0 #a5a5a8"><div class="t" style="left:6.6px;top:2px;letter-spacing:-0.478px;">User</div></div>
<div class="a" style="left:50px;top:6px;width:40px;height:17px;background:#e0dfe3;border:1px solid;border-color:#fff #6e6e72 transparent #fff;border-radius:2px 2px 0 0;box-shadow:inset -1px 0 0 #a5a5a8"><div class="t" style="left:3px;top:2px;letter-spacing:-0.114px;">Auto</div></div>
<div class="sunk" style="left:7px;top:26px;width:136px;height:300px;background:#fff"></div>
</div>
<div class="a" style="left:10px;top:55px;width:23px;height:21px;background:#f0eff2;border:1px solid;border-color:#8f8f94 #fff #fff #8f8f94;background-image:repeating-conic-gradient(#fff 0 25%,#e0dfe3 0 50%);background-size:2px 2px"></div>
<div class="a" style="left:586px;top:55px;width:23px;height:21px;background:#f0eff2;border:1px solid;border-color:#8f8f94 #fff #fff #8f8f94;background-image:repeating-conic-gradient(#fff 0 25%,#e0dfe3 0 50%);background-size:2px 2px"></div>
<svg class="a" style="left:0;top:52px" width="1022" height="28" viewBox="0 0 1022 28"><defs>
<pattern id="hz" width="4" height="4" patternUnits="userSpaceOnUse" patternTransform="rotate(32)"><rect width="4" height="4" fill="#ffff00"/><rect width="2" height="4" fill="#000"/></pattern>
<pattern id="dth" width="2" height="2" patternUnits="userSpaceOnUse"><rect width="2" height="2" fill="#008080"/><rect width="1" height="1" fill="#00a0a0"/><rect x="1" y="1" width="1" height="1" fill="#00a0a0"/></pattern>
<pattern id="db" width="2" height="2" patternUnits="userSpaceOnUse"><rect width="1" height="1" fill="#0000ff"/><rect x="1" y="1" width="1" height="1" fill="#0000ff"/></pattern>
<pattern id="dg" width="2" height="2" patternUnits="userSpaceOnUse"><rect width="1" height="1" fill="#9a9aa0"/><rect x="1" y="1" width="1" height="1" fill="#9a9aa0"/></pattern>
</defs><rect x="16" y="11" width="13" height="1" fill="#000" /><rect x="16" y="18" width="13" height="1" fill="#000" /><rect x="19" y="8" width="1" height="13" fill="#000" /><rect x="26" y="8" width="1" height="13" fill="#000" /><rect x="14" y="11" width="1" height="1" fill="#000" /><rect x="14" y="18" width="1" height="1" fill="#000" /><rect x="30" y="11" width="1" height="1" fill="#000" /><rect x="30" y="18" width="1" height="1" fill="#000" /><rect x="19" y="6" width="1" height="1" fill="#000" /><rect x="26" y="6" width="1" height="1" fill="#000" /><rect x="19" y="22" width="1" height="1" fill="#000" /><rect x="26" y="22" width="1" height="1" fill="#000" /><rect x="37" y="6" width="4" height="1" fill="#000" /><rect x="40" y="7" width="2" height="1" fill="#000" /><rect x="38" y="8" width="3" height="1" fill="#000" /><rect x="40" y="9" width="2" height="1" fill="#000" /><rect x="36" y="7" width="2" height="1" fill="#000" /><rect x="36" y="10" width="2" height="1" fill="#000" /><rect x="37" y="11" width="4" height="1" fill="#000" /><rect x="40" y="10" width="2" height="1" fill="#000" /><rect x="42" y="6" width="5" height="1" fill="#000" /><rect x="42" y="11" width="5" height="1" fill="#000" /><rect x="42" y="7" width="2" height="1" fill="#000" /><rect x="42" y="8" width="2" height="1" fill="#000" /><rect x="42" y="9" width="2" height="1" fill="#000" /><rect x="42" y="10" width="2" height="1" fill="#000" /><rect x="46" y="7" width="2" height="1" fill="#000" /><rect x="46" y="8" width="2" height="1" fill="#000" /><rect x="46" y="9" width="2" height="1" fill="#000" /><rect x="46" y="10" width="2" height="1" fill="#000" /><rect x="40" y="15" width="11" height="1" fill="#000" /><rect x="40" y="18" width="11" height="1" fill="#000" /><rect x="43" y="12" width="1" height="9" fill="#000" /><rect x="47" y="12" width="1" height="9" fill="#000" /><rect x="59" y="11" width="11" height="1" fill="#000" /><rect x="59" y="15" width="11" height="1" fill="#000" /><rect x="59" y="18" width="11" height="1" fill="#000" /><rect x="61" y="10" width="1" height="11" fill="#000" /><rect x="64" y="10" width="1" height="11" fill="#000" /><rect x="68" y="10" width="1" height="11" fill="#000" /><rect x="82" y="11" width="11" height="1" fill="#000" /><rect x="82" y="15" width="11" height="1" fill="#000" /><rect x="82" y="18" width="11" height="1" fill="#000" /><rect x="84" y="10" width="1" height="11" fill="#000" /><rect x="87" y="10" width="1" height="11" fill="#000" /><rect x="91" y="10" width="1" height="11" fill="#000" /><rect x="70" y="8" width="5" height="2" fill="#00ffff" /><rect x="92" y="8" width="6" height="2" fill="#00ffff" /><rect x="94" y="6" width="2" height="6" fill="#00ffff" /><rect x="116" y="6" width="9" height="7" fill="#e8e8f4" /><rect x="116" y="6" width="9" height="2" fill="#0000ff" /><path transform="translate(0,-52)" d="M116.5 58.5 h8 v6 h-8 z" stroke="#0000ff" stroke-width="1" fill="none" /><rect x="118" y="10" width="9" height="7" fill="#e8e8f4" /><rect x="118" y="10" width="9" height="2" fill="#0000ff" /><path transform="translate(0,-52)" d="M118.5 62.5 h8 v6 h-8 z" stroke="#0000ff" stroke-width="1" fill="none" /><rect x="120" y="14" width="9" height="7" fill="#e8e8f4" /><rect x="120" y="14" width="9" height="2" fill="#0000ff" /><path transform="translate(0,-52)" d="M120.5 66.5 h8 v6 h-8 z" stroke="#0000ff" stroke-width="1" fill="none" /><text x="112.3" y="21" font-family="Liberation Sans" font-size="9.5" font-weight="normal" fill="#000" >L</text><rect x="139" y="6" width="9" height="7" fill="#e8e8f4" /><rect x="139" y="6" width="9" height="2" fill="#0000ff" /><path transform="translate(0,-52)" d="M139.5 58.5 h8 v6 h-8 z" stroke="#0000ff" stroke-width="1" fill="none" /><rect x="141" y="10" width="9" height="7" fill="#e8e8f4" /><rect x="141" y="10" width="9" height="2" fill="#0000ff" /><path transform="translate(0,-52)" d="M141.5 62.5 h8 v6 h-8 z" stroke="#0000ff" stroke-width="1" fill="none" /><rect x="143" y="14" width="9" height="7" fill="#e8e8f4" /><rect x="143" y="14" width="9" height="2" fill="#0000ff" /><path transform="translate(0,-52)" d="M143.5 66.5 h8 v6 h-8 z" stroke="#0000ff" stroke-width="1" fill="none" /><text x="135.3" y="21" font-family="Liberation Sans" font-size="9.5" font-weight="normal" fill="#000" >S</text><path transform="translate(0,-52)" d="M177 65.2 l3.1500000000000004 -3.1500000000000004 l8.4 0 l0 7.3500000000000005 l-3.1500000000000004 3.1500000000000004 l-8.4 0 z" stroke="none" stroke-width="0" fill="#fff" /><path transform="translate(0,-52)" d="M176 64.2 l3.1500000000000004 -3.1500000000000004 l8.4 0 l0 7.3500000000000005 l-3.1500000000000004 3.1500000000000004 l-8.4 0 z" stroke="none" stroke-width="0" fill="#9b9b9f" /><path transform="translate(0,-52)" d="M176.6 63.78 l2.7300000000000004 -2.7300000000000004 l7.3500000000000005 0 l-2.7300000000000004 2.7300000000000004 z" stroke="none" stroke-width="0" fill="#d4d4d8" /><path transform="translate(0,-52)" d="M204.5 58.5 h15 v14 h-15 z" stroke="#8c8c90" stroke-width="1" fill="none" stroke-dasharray="2 1"/><path transform="translate(0,-52)" d="M206 62.88 l2.16 -2.16 l5.76 0 l0 5.04 l-2.16 2.16 l-5.76 0 z" stroke="none" stroke-width="0" fill="#9b9b9f" /><path transform="translate(0,-52)" d="M206.6 62.592 l1.8719999999999999 -1.8719999999999999 l5.04 0 l-1.8719999999999999 1.8719999999999999 z" stroke="none" stroke-width="0" fill="#d4d4d8" /><path transform="translate(0,-52)" d="M211 66.88 l2.16 -2.16 l5.76 0 l0 5.04 l-2.16 2.16 l-5.76 0 z" stroke="none" stroke-width="0" fill="#9b9b9f" /><path transform="translate(0,-52)" d="M211.6 66.592 l1.8719999999999999 -1.8719999999999999 l5.04 0 l-1.8719999999999999 1.8719999999999999 z" stroke="none" stroke-width="0" fill="#d4d4d8" /><path transform="translate(0,-52)" d="M229 62.88 l2.16 -2.16 l5.76 0 l0 5.04 l-2.16 2.16 l-5.76 0 z" stroke="none" stroke-width="0" fill="#fff" /><path transform="translate(0,-52)" d="M228 61.88 l2.16 -2.16 l5.76 0 l0 5.04 l-2.16 2.16 l-5.76 0 z" stroke="none" stroke-width="0" fill="#9b9b9f" /><path transform="translate(0,-52)" d="M228.6 61.592 l1.8719999999999999 -1.8719999999999999 l5.04 0 l-1.8719999999999999 1.8719999999999999 z" stroke="none" stroke-width="0" fill="#d4d4d8" /><path transform="translate(0,-52)" d="M235 68.88 l2.16 -2.16 l5.76 0 l0 5.04 l-2.16 2.16 l-5.76 0 z" stroke="none" stroke-width="0" fill="#fff" /><path transform="translate(0,-52)" d="M234 67.88 l2.16 -2.16 l5.76 0 l0 5.04 l-2.16 2.16 l-5.76 0 z" stroke="none" stroke-width="0" fill="#9b9b9f" /><path transform="translate(0,-52)" d="M234.6 67.592 l1.8719999999999999 -1.8719999999999999 l5.04 0 l-1.8719999999999999 1.8719999999999999 z" stroke="none" stroke-width="0" fill="#d4d4d8" /><path transform="translate(0,-52)" d="M238 60 l-1.5 3 M240.5 62.5 l-2.5 2 M230 69 l2.5 -1 M232 72.5 l1.5 -2.5" stroke="#8c8c90" stroke-width="1" fill="none" /><text x="253.5" y="17" font-family="Liberation Sans" font-size="11.5" font-weight="normal" fill="#000" >ig</text><path transform="translate(0,-52)" d="M283.5 62.5 h9 v8 h-9 z M283.5 62.5 l3 -3 h9 v8 l-3 3 M292.5 62.5 l3 -3" stroke="#ff0000" stroke-width="1.3" fill="none" stroke-dasharray="2 1"/><path transform="translate(0,-52)" d="M306.5 62.5 h9 v8 h-9 z M306.5 62.5 l3 -3 h9 v8 l-3 3 M315.5 62.5 l3 -3" stroke="#000" stroke-width="1.3" fill="none" stroke-dasharray="2 1"/><path transform="translate(0,-52)" d="M342 59.5 l4 9 M348 59.5 l-4 9" stroke="#fff" stroke-width="1.2" fill="none" /><ellipse cx="342.3" cy="18.299999999999997" rx="1.8" ry="2.2" fill="none" stroke="#fff" stroke-width="1.1"/><ellipse cx="347.7" cy="18.299999999999997" rx="1.8" ry="2.2" fill="none" stroke="#fff" stroke-width="1.1"/><path transform="translate(0,-52)" d="M341 58.5 l4 9 M347 58.5 l-4 9" stroke="#9b9b9f" stroke-width="1.2" fill="none" /><ellipse cx="341.3" cy="17.299999999999997" rx="1.8" ry="2.2" fill="none" stroke="#9b9b9f" stroke-width="1.1"/><ellipse cx="346.7" cy="17.299999999999997" rx="1.8" ry="2.2" fill="none" stroke="#9b9b9f" stroke-width="1.1"/><path transform="translate(0,-52)" d="M360.5 59.5 h5 l3 3 v7 h-8 z" stroke="#fff" stroke-width="1" fill="none" /><path transform="translate(0,-52)" d="M359.5 58.5 h5 l3 3 v7 h-8 z" stroke="#9b9b9f" stroke-width="1" fill="#e6e5e9" /><path transform="translate(0,-52)" d="M361 62.5 h4 M361 64.5 h4 M361 66.5 h4" stroke="#9b9b9f" stroke-width="1" fill="none" /><path transform="translate(0,-52)" d="M367.5 63.5 h5 l3 3 v7 h-8 z" stroke="#fff" stroke-width="1" fill="none" /><path transform="translate(0,-52)" d="M366.5 62.5 h5 l3 3 v7 h-8 z" stroke="#9b9b9f" stroke-width="1" fill="#e6e5e9" /><path transform="translate(0,-52)" d="M368 66.5 h4 M368 68.5 h4 M368 70.5 h4" stroke="#9b9b9f" stroke-width="1" fill="none" /><path transform="translate(0,-52)" d="M382.5 60.5 h12 v10 h-12 z" stroke="#000" stroke-width="1" fill="#008080" /><rect x="383" y="9" width="11" height="9" fill="url(#dth)"/><path transform="translate(0,-52)" d="M386 61 l1.5 -2.5 h2 l1.5 2.5 z" stroke="#000" stroke-width="1" fill="#d8d8d8" /><path transform="translate(0,-52)" d="M388.5 65.5 h8 v6 h-8 z" stroke="#000080" stroke-width="1.2" fill="#fff" /><rect x="390" y="15" width="4" height="1" fill="#000080" /><rect x="390" y="17" width="5" height="1" fill="#000080" /><rect x="412" y="9" width="16" height="10" fill="url(#hz)"/><rect x="436" y="9" width="14" height="10" fill="url(#hz)"/><rect x="440" y="12" width="7" height="4" fill="#c9c8cc" /><rect x="435" y="8" width="3" height="3" fill="#ff0000" /><rect x="448" y="8" width="3" height="3" fill="#ff0000" /><rect x="435" y="17" width="3" height="3" fill="#ff0000" /><rect x="448" y="17" width="3" height="3" fill="#ff0000" /><path transform="translate(0,-52)" d="M468 60 h11 v11 h-11 z" stroke="#000" stroke-width="2" fill="#d4d3d7" /><rect x="466" y="6" width="3" height="3" fill="#000" /><rect x="478" y="6" width="3" height="3" fill="#000" /><rect x="466" y="18" width="3" height="3" fill="#000" /><rect x="478" y="18" width="3" height="3" fill="#000" /><path transform="translate(0,-52)" d="M471 63 l5 5 M476 63 l-5 5" stroke="#8a8a8e" stroke-width="1" fill="none" /><path transform="translate(0,-52)" d="M490.5 59.5 h10 v10 h-10 z" stroke="#00ffff" stroke-width="1.3" fill="none" stroke-dasharray="2 1"/><path transform="translate(0,-52)" d="M499 68 v6 l1.6 -1.6 l1.8 2.6 l1 -0.8 l-1.8 -2.4 h2.2 z" stroke="#000" stroke-width="0.5" fill="#000" /><text x="515.8" y="18" font-family="Liberation Sans" font-size="12.5" font-weight="normal" fill="#000" letter-spacing="1">tl</text><text x="539.6" y="18" font-family="Liberation Sans" font-size="12.5" font-weight="normal" fill="#000" letter-spacing="0.7">tl</text><path transform="translate(0,-52)" d="M535 65.5 h4 M537.5 63 l-2.5 2.5 l2.5 2.5 M547 65.5 h4 M548.5 63 l2.5 2.5 l-2.5 2.5" stroke="#000" stroke-width="1.2" fill="none" /><path transform="translate(0,-52)" d="M558.5 63 l5 -4.5 v9.5 l-5 4.5 z" stroke="#000" stroke-width="1.2" fill="#a0a0a4" /><path transform="translate(0,-52)" d="M568.5 63 l5 -4.5 v9.5 l-5 4.5 z" stroke="none" stroke-width="0" fill="#e00000" /><path transform="translate(0,-52)" d="M568.5 63 l2.5 -2.2 v4.7 l-2.5 2.2 z M571 65.5 l2.5 -2.2 v4.7 l-2.5 2.2 z" stroke="none" stroke-width="0" fill="#009a20" /><path transform="translate(0,-52)" d="M564 58.5 h9 M564 72.5 h5" stroke="#fff" stroke-width="1" fill="none" stroke-dasharray="1 1"/><text x="590" y="17.299999999999997" font-family="Liberation Sans" font-size="14" font-weight="bold" fill="#0000e6" stroke="#0000e6" stroke-width="0.7">D</text><text x="597" y="21.5" font-family="Liberation Sans" font-size="14" font-weight="bold" fill="#e60000" stroke="#e60000" stroke-width="0.7">D</text><text x="612" y="16.799999999999997" font-family="Liberation Sans" font-size="12.5" font-weight="bold" fill="#0000e6" stroke="#0000e6" stroke-width="0.7">D</text><text x="613.5" y="20.599999999999994" font-family="Liberation Sans" font-size="13.5" font-weight="bold" fill="#e60000" stroke="#e60000" stroke-width="0.7">W</text><text x="635" y="16.799999999999997" font-family="Liberation Sans" font-size="12.5" font-weight="bold" fill="#0000e6" stroke="#0000e6" stroke-width="0.7">D</text><text x="642" y="20.599999999999994" font-family="Liberation Sans" font-size="13" font-weight="bold" fill="#e60000" stroke="#e60000" stroke-width="0.7">R</text><path transform="translate(0,-52)" d="M670.2 62 c0.5 -2.2 4 -2 3.6 -0.2 c-0.4 1.6 -3.6 0.8 -3.2 2.6" stroke="#000" stroke-width="1.1" fill="none" /><path transform="translate(0,-52)" d="M674 66.2 l3.5 -3 M675.5 69.8 l4.5 -3.6" stroke="#000" stroke-width="1.1" fill="none" /><circle cx="672.6" cy="16.299999999999997" r="2.7" fill="#fff" stroke="#000" stroke-width="1.1"/><circle cx="679" cy="12.200000000000003" r="2.7" fill="#fff" stroke="#000" stroke-width="1.1"/><rect x="672" y="16" width="1" height="1" fill="#c000c0" /><rect x="673" y="15" width="1" height="1" fill="#c000c0" /><rect x="678" y="11" width="1" height="1" fill="#00c000" /><rect x="679" y="12" width="1" height="1" fill="#e0c000" /><rect x="680" y="11" width="1" height="1" fill="#2020e0" /><rect x="678" y="13" width="1" height="1" fill="#e00000" /><path transform="translate(0,-52)" d="M694.5 59 h5 l4 4 v5 l-4 4 h-5 l-4 -4 v-5 z" stroke="#000" stroke-width="1.3" fill="#fff" /><path transform="translate(0,-52)" d="M694.8 59.2 l-2.3 7 M699.2 59.2 l2.3 7 M690.6 66.2 h12.8 M692.5 66.2 l2.6 5.6 M701.5 66.2 l-2.6 5.6 M694 69.3 h6" stroke="#000" stroke-width="0.9" fill="none" /><path transform="translate(0,-52)" d="M713.6 60.4 h12.8 v10.8 h-12.8 z" stroke="#000" stroke-width="1.5" fill="#fff" /><path transform="translate(0,-52)" d="M717.6 61 v3.2 l-1.8 3 v3.6 M721.4 61 v3.2 l-1.8 3 v3.6 M725.2 61 v3.2 l-1.8 3 v3.6" stroke="#000" stroke-width="1.0" fill="none" /><rect x="745" y="6" width="6" height="7" fill="url(#dg)"/><rect x="740" y="9" width="8" height="8" fill="url(#db)"/><rect x="735" y="13" width="8" height="8" fill="#0000ff" /><text x="757.7" y="16.900000000000006" font-family="Liberation Sans" font-size="9.6" font-weight="normal" fill="#000" textLength="15.7" lengthAdjust="spacingAndGlyphs" stroke="#000" stroke-width="0.15">CM</text></svg>
<svg class="a" width="0" height="0" style="left:0;top:0"><defs><pattern id="bk" width="6" height="4" patternUnits="userSpaceOnUse" patternTransform="skewY(32)"><rect width="6" height="4" fill="#a94e36"/><path d="M0 0.5 h6 M0 2.5 h6 M1.5 0 v2 M4.5 2 v2" stroke="#8a3c28" stroke-width="0.6"/><path d="M0 1.5 h3 M3 3.5 h3" stroke="#cf7a55" stroke-width="0.8"/></pattern>
<pattern id="dt" width="3" height="3" patternUnits="userSpaceOnUse"><rect x="1" y="1" width="1" height="1" fill="#e8dc7a"/></pattern>
<pattern id="dk" width="4" height="4" patternUnits="userSpaceOnUse"><rect x="1" y="1" width="2" height="2" fill="#101820"/></pattern>
<pattern id="dy" width="3" height="3" patternUnits="userSpaceOnUse"><rect x="1" y="1" width="1" height="1" fill="#c8e020"/></pattern>
<pattern id="dr" width="3" height="3" patternUnits="userSpaceOnUse"><rect x="1" y="1" width="1" height="1" fill="#e07030"/></pattern></defs></svg>
<div class="a" style="left:7px;top:88px;width:47px;height:38px;border:1px solid;border-color:#8f8f94 #fff #fff #8f8f94;background-image:repeating-conic-gradient(#fff 0 25%,#e0dfe3 0 50%);background-size:2px 2px"></div>
<svg class="a" style="left:11px;top:92px;background:#c0c0c0" width="40" height="32" viewBox="0 0 40 32"><polygon points="9.6,25.4 11.1,27.4 26.1,21.4 27.1,23.4 33.9,17.4 24.6,16.4 25.4,18.5" fill="#383838"/><polygon points="6.3,23.5 9.5,25.9 19.4,13.5 22.9,15.7 24.5,2.6 13.9,9.1 16.8,11.2" fill="#ff0000"/><polygon points="19.4,13.5 22.9,15.7 24.5,2.6" fill="#c00000"/></svg>
<svg class="a" style="left:10px;top:129px;background:#c0c0c0" width="40" height="32" viewBox="0 0 40 32"><ellipse cx="26.8" cy="20.8" rx="9.5" ry="4.2" fill="#3a3a3a" transform="rotate(-12 26.8 20.8)"/><polygon points="23.0,21.0 24.0,24.0 11.0,28.5 9.5,26.5" fill="#3a3a3a"/><polygon points="13.6,15.6 17.4,18.6 9.8,26.4 6.3,23.4" fill="#f00000"/><circle cx="19.5" cy="10.4" r="8.6" fill="#e80000"/><circle cx="19.3" cy="10.0" r="6.2" fill="#ff2a2a" stroke="#b00000" stroke-width="0.8"/><circle cx="17.5" cy="8.3" r="2" fill="#ff8a8a"/></svg>
<svg class="a" style="left:10px;top:167px;background:#c0c0c0" width="40" height="32" viewBox="0 0 40 32"><polygon points="18.0,29.0 32.0,23.0 39.0,22.0 35.0,27.5 23.0,31.0" fill="#505050"/><polygon points="4.5,3.5 9.0,1.3 23.0,4.5 32.0,7.5 31.0,22.0 22.0,29.0 12.0,25.0 5.0,20.0" fill="#e00000"/><polygon points="23.0,9.0 32.0,7.5 31.0,22.0 22.0,29.0" fill="#7a0000"/><polygon points="17.5,8.0 23.0,9.0 22.0,29.0 17.0,26.5" fill="#b00000"/><polygon points="4.5,3.5 9.0,1.3 20.0,3.5 17.0,6.5" fill="#ff1010"/><ellipse cx="9.8" cy="19.0" rx="5.2" ry="6" fill="#d00000" stroke="#900000" stroke-width="1"/><ellipse cx="10.5" cy="20.0" rx="2.6" ry="3.2" fill="#a80000"/></svg>
<svg class="a" style="left:10px;top:211px;background:#c0c0c0" width="40" height="32" viewBox="0 0 40 32"><polygon points="21.0,20.0 26.0,15.5 36.0,15.0 37.0,19.0 28.0,25.0 22.0,29.0" fill="#6e6e6e"/><rect x="12.8" y="13.0" width="9.5" height="16" rx="2.5" fill="#d8d8d8"/><rect x="19.0" y="14.0" width="3.5" height="16" rx="1.5" fill="#505050"/><rect x="14.2" y="16.0" width="3" height="12" rx="1.5" fill="#f4f4f4"/><circle cx="17.5" cy="7.5" r="7" fill="#d4d4d0"/><circle cx="15.6" cy="6.2" r="5.2" fill="#f6f2b4"/><circle cx="15.0" cy="5.6" r="3" fill="#fffbd8"/></svg>
<svg class="a" style="left:10px;top:249px;background:#c0c0c0" width="40" height="32" viewBox="0 0 40 32"><polygon points="17.2,30.1 30.0,21.6 34.7,16.0 38.7,19.3 31.3,27.8" fill="#3c3c3c"/><polygon points="4.2,5.7 16.1,12.0 17.2,30.1 5.3,22.1" fill="#cfcfd4"/><polygon points="4.2,5.7 16.1,12.0 17.2,30.1 5.3,22.1" fill="url(#dt)"/><polygon points="16.1,12.0 30.2,6.3 30.0,21.6 17.2,30.1" fill="#6e6e6e"/><polygon points="4.2,5.7 17.2,2.4 30.2,6.3 16.1,12.0" fill="#e4e4e6"/></svg>
<svg class="a" style="left:10px;top:293px;background:#c0c0c0" width="40" height="32" viewBox="0 0 40 32"><polygon points="17.2,30.1 30.0,21.6 34.7,16.0 38.7,19.3 31.3,27.8" fill="#3c3c3c"/><polygon points="4.2,5.7 16.1,12.0 17.2,30.1 5.3,22.1" fill="#2a78b6"/><polygon points="4.2,5.7 16.1,12.0 17.2,30.1 5.3,22.1" fill="url(#dk)"/><polygon points="16.1,12.0 30.2,6.3 30.0,21.6 17.2,30.1" fill="#2f8f30"/><polygon points="16.1,12.0 30.2,6.3 30.0,21.6 17.2,30.1" fill="url(#dy)"/><polygon points="4.2,5.7 17.2,2.4 30.2,6.3 16.1,12.0" fill="#d8684a"/><polygon points="4.2,5.7 17.2,2.4 30.2,6.3 16.1,12.0" fill="url(#dr)"/></svg>
<svg class="a" style="left:10px;top:331px;background:#c0c0c0" width="40" height="32" viewBox="0 0 40 32"><polygon points="17.2,30.1 30.0,21.6 34.7,16.0 38.7,19.3 31.3,27.8" fill="#3c3c3c"/><polygon points="4.2,5.7 16.1,12.0 17.2,30.1 5.3,22.1" fill="#a94e36"/><polygon points="4.2,5.7 16.1,12.0 17.2,30.1 5.3,22.1" fill="url(#bk)"/><polygon points="16.1,12.0 30.2,6.3 30.0,21.6 17.2,30.1" fill="#73382a"/><polygon points="4.2,5.7 17.2,2.4 30.2,6.3 16.1,12.0" fill="#d08463"/></svg>
<svg class="a" style="left:10px;top:369px;background:#c0c0c0" width="40" height="32" viewBox="0 0 40 32"><polygon points="17.2,30.1 30.0,21.6 34.7,16.0 38.7,19.3 31.3,27.8" fill="#3c3c3c"/><polygon points="4.2,5.7 16.1,12.0 17.2,30.1 5.3,22.1" fill="#a94e36"/><polygon points="4.2,5.7 16.1,12.0 17.2,30.1 5.3,22.1" fill="url(#bk)"/><polygon points="16.1,12.0 30.2,6.3 30.0,21.6 17.2,30.1" fill="#73382a"/><polygon points="4.2,5.7 17.2,2.4 30.2,6.3 16.1,12.0" fill="#d08463"/><ellipse cx="25.3" cy="18.5" rx="1.04" ry="1.3" fill="none" stroke="#ff1010" stroke-width="1.4"/><ellipse cx="25.3" cy="18.5" rx="3.2" ry="4" fill="none" stroke="#ff1010" stroke-width="1.4"/><ellipse cx="25.3" cy="18.5" rx="5.44" ry="6.8" fill="none" stroke="#ff1010" stroke-width="1.4"/></svg>
<svg class="a" style="left:10px;top:407px;background:#c0c0c0" width="40" height="32" viewBox="0 0 40 32"><polygon points="17.2,30.5 30.0,23.0 34.0,18.5 38.5,21.5 31.3,28.5" fill="#3c3c3c"/><polygon points="4.2,12.5 16.1,17.5 17.2,30.5 5.3,23.5" fill="#a94e36"/><polygon points="4.2,12.5 16.1,17.5 17.2,30.5 5.3,23.5" fill="url(#bk)"/><polygon points="16.1,17.5 30.2,12.8 30.0,23.0 17.2,30.5" fill="#73382a"/><polygon points="4.2,12.5 17.2,8.8 30.2,12.8 16.1,17.5" fill="#d08463"/><polygon points="7.5,12.6 17.2,10.0 26.8,12.8 16.3,16.0" fill="#4c8a28"/></svg>
<svg class="a" style="left:10px;top:451px;background:#c0c0c0" width="40" height="32" viewBox="0 0 40 32"><polygon points="17.0,29.4 31.3,20.0 33.8,15.5 35.0,18.5 31.8,24.0" fill="#3c3c3c"/><polygon points="2.7,5.8 6.4,7.6 17.0,24.4 17.0,29.4 6.4,20.0" fill="#a94e36"/><polygon points="2.7,5.8 6.4,7.6 17.0,24.4 17.0,29.4 6.4,20.0" fill="url(#bk)"/><polygon points="17.0,24.4 30.0,15.7 31.3,20.0 17.0,29.4" fill="#6c2c1c"/><polygon points="2.7,5.8 18.8,2.0 23.2,3.3 6.4,7.6" fill="#d05838"/><polygon points="6.4,7.6 23.2,3.3 30.0,15.7 17.0,24.4" fill="#e4d464"/><polygon points="6.4,7.6 23.2,3.3 30.0,15.7 17.0,24.4" fill="url(#dr)" opacity="0.6"/></svg>
<svg class="a" style="left:10px;top:489px;background:#c0c0c0" width="40" height="32" viewBox="0 0 40 32"><line x1="23.0" y1="18.0" x2="34.0" y2="16.0" stroke="#d0d0d4" stroke-width="0.9"/><line x1="34.0" y1="16.0" x2="38.5" y2="19.5" stroke="#d0d0d4" stroke-width="0.9"/><line x1="38.5" y1="19.5" x2="28.0" y2="29.0" stroke="#d0d0d4" stroke-width="0.9"/><line x1="28.0" y1="29.0" x2="17.0" y2="30.0" stroke="#d0d0d4" stroke-width="0.9"/><line x1="23.0" y1="18.0" x2="28.0" y2="29.0" stroke="#d0d0d4" stroke-width="0.9"/><line x1="28.5" y1="20.8" x2="38.5" y2="19.5" stroke="#d0d0d4" stroke-width="0.9"/><line x1="17.6" y1="1.8" x2="2.4" y2="5.9" stroke="#8c8c8c" stroke-width="0.9"/><line x1="17.6" y1="1.8" x2="30.3" y2="5.9" stroke="#8c8c8c" stroke-width="0.9"/><line x1="2.4" y1="5.9" x2="6.4" y2="22.1" stroke="#8c8c8c" stroke-width="0.9"/><line x1="30.3" y1="5.9" x2="28.5" y2="20.8" stroke="#8c8c8c" stroke-width="0.9"/><line x1="6.4" y1="22.1" x2="16.4" y2="30.3" stroke="#8c8c8c" stroke-width="0.9"/><line x1="28.5" y1="20.8" x2="16.4" y2="30.3" stroke="#8c8c8c" stroke-width="0.9"/><line x1="17.6" y1="1.8" x2="18.5" y2="15.8" stroke="#8c8c8c" stroke-width="0.9"/><line x1="15.4" y1="13.0" x2="2.4" y2="5.9" stroke="#303030" stroke-width="1.1"/><line x1="15.4" y1="13.0" x2="30.3" y2="5.9" stroke="#303030" stroke-width="1.1"/><line x1="15.4" y1="13.0" x2="16.4" y2="30.3" stroke="#303030" stroke-width="1.1"/><line x1="18.5" y1="15.8" x2="6.4" y2="22.1" stroke="#303030" stroke-width="1.1"/><line x1="18.5" y1="15.8" x2="28.5" y2="20.8" stroke="#303030" stroke-width="1.1"/><line x1="17.6" y1="1.8" x2="15.4" y2="13.0" stroke="#303030" stroke-width="1.1"/><rect x="16.1" y="0.3" width="3" height="3" fill="#ff0000"/><rect x="0.9" y="4.4" width="3" height="3" fill="#ff0000"/><rect x="28.8" y="4.4" width="3" height="3" fill="#ff0000"/><rect x="17.0" y="14.3" width="3" height="3" fill="#a00000"/><rect x="4.9" y="20.6" width="3" height="3" fill="#b00000"/><rect x="27.0" y="19.3" width="3" height="3" fill="#b00000"/><rect x="14.9" y="28.8" width="3" height="3" fill="#f00000"/><rect x="13.9" y="11.5" width="3" height="3" fill="#ff0000"/></svg>
<div class="lsep" style="top:205px"></div>
<div class="lsep" style="top:287px"></div>
<div class="lsep" style="top:445px"></div>
<div class="a" style="left:4px;top:541px;width:54px;height:1px;background:#9d9da1"></div><div class="a" style="left:4px;top:542px;width:54px;height:1px;background:#fff"></div>
<div class="a" style="left:57px;top:82px;width:1px;height:619px;background:#eeeef1"></div>
</div></body></html>
